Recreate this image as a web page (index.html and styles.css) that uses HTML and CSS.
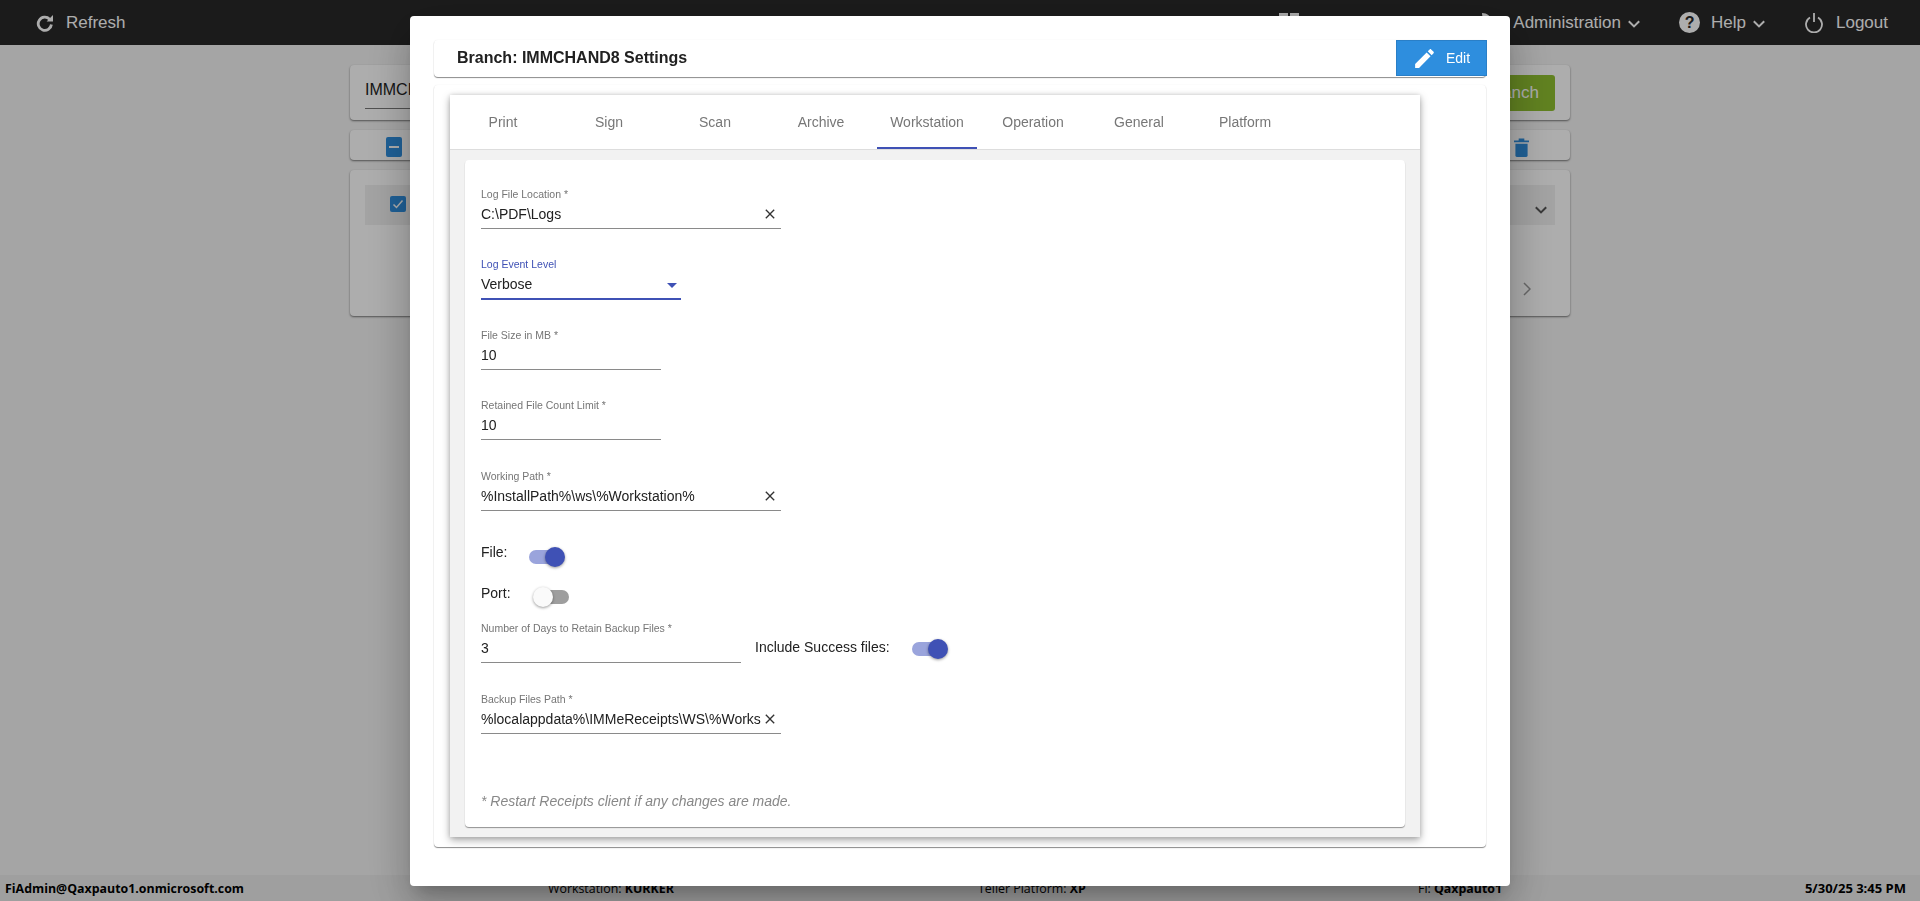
FILE: index.html
```html
<!DOCTYPE html>
<html lang="en">
<head>
<meta charset="utf-8">
<title>Branch Settings</title>
<link rel="stylesheet" href="styles.css">
</head>
<body>
<div class="page">
  <header class="topbar">
    <div class="nav-item refresh">
      <svg class="ico-refresh" viewBox="0 0 18 18"><path d="M13.6 5.2A6.6 6.6 0 1 0 15.4 10.5" fill="none" stroke="#fff" stroke-width="2.8"/><path d="M10.6 7.4H17V1z" fill="#fff"/></svg>
      <span>Refresh</span>
    </div>
    <div class="nav-spacer"></div>
    <svg class="ico-grid" viewBox="0 0 20 20"><path fill="#fff" d="M0 0h9v9H0zM11 0h9v9h-9zM0 11h9v9H0zM11 11h9v9h-9z"/></svg>
    <svg class="ico-wrench" viewBox="0 0 20 20"><path fill="#fff" d="M0 0c5 0 9 3 10 8l10 10-3 2L7 10C3 9 0 5 0 0z"/></svg>
    <div class="nav-item admin"><span>Administration</span><svg class="chev" viewBox="0 0 12 8"><path d="M.8 1.200 6 6.400l5.200-5.200" fill="none" stroke="#fff" stroke-width="2"/></svg></div>
    <div class="nav-item help"><span class="help-dot">?</span><span>Help</span><svg class="chev" viewBox="0 0 12 8"><path d="M.8 1.200 6 6.400l5.200-5.200" fill="none" stroke="#fff" stroke-width="2"/></svg></div>
    <div class="nav-item logout">
      <svg class="ico-power" viewBox="0 0 20 20"><path d="M6 4.500a8 8 0 1 0 8 0" fill="none" stroke="#fff" stroke-width="1.800"/><path d="M10 0v9" fill="none" stroke="#fff" stroke-width="1.800"/></svg>
      <span>Logout</span>
    </div>
  </header>

  <main class="behind">
    <section class="bg-card search-card">
      <div class="search-input">IMMCHAND8</div>
      <button class="green-btn">Add Branch</button>
    </section>
    <section class="bg-card tool-card">
      <svg class="box-minus" viewBox="0 0 16 20"><rect width="16" height="20" rx="2" fill="#2e8ede"/><path d="M3 10h10" stroke="#fff" stroke-width="2"/></svg>
      <svg class="trash" viewBox="0 0 16 20"><path d="M5 1.500h6M0 3.500h16" stroke="#2e8ede" stroke-width="2"/><path d="M1.500 6h13v12.500a1.500 1.500 0 0 1-1.500 1.500H3a1.500 1.500 0 0 1-1.500-1.500z" fill="#2e8ede"/></svg>
    </section>
    <section class="bg-card list-card">
      <div class="list-row">
        <svg class="box-check" viewBox="0 0 16 16"><rect width="16" height="16" rx="2" fill="#2e8ede"/><path d="M3.500 8.500 6.500 11.500 12.500 4.500" fill="none" stroke="#fff" stroke-width="1.500"/></svg>
        <svg class="row-chev" viewBox="0 0 12 8"><path d="M.8 1.200 6 6.400l5.200-5.200" fill="none" stroke="#555" stroke-width="2"/></svg>
      </div>
      <div class="pager">
        <svg class="pager-chev" viewBox="0 0 8 14"><path d="M1 1l6 6-6 6" fill="none" stroke="#999" stroke-width="1.500"/></svg>
      </div>
    </section>
  </main>

  <footer class="status">
    <span class="st-user">FiAdmin@Qaxpauto1.onmicrosoft.com</span>
    <span class="st-ws">Workstation: <b>KURKER</b></span>
    <span class="st-tp">Teller Platform: <b>XP</b></span>
    <span class="st-fi">Fi: <b>Qaxpauto1</b></span>
    <span class="st-date">5/30/25 3:45 PM</span>
  </footer>
</div>

<div class="backdrop">
  <div class="modal">
    <div class="head-card">
      <h1 class="title">Branch: IMMCHAND8 Settings</h1>
      <button class="edit-btn">
        <svg class="ico-edit" viewBox="0 0 24 24"><path fill="#fff" d="M3 17.250V21h3.750L17.810 9.940l-3.750-3.750L3 17.250zM20.710 7.040c.39-.39.39-1.020 0-1.410l-2.340-2.340c-.39-.39-1.020-.39-1.410 0l-1.830 1.830 3.750 3.750 1.830-1.830z"/></svg>
        <span>Edit</span>
      </button>
    </div>

    <div class="body-card">
      <div class="tab-panel">
        <nav class="tabs">
          <div class="tab">Print</div>
          <div class="tab">Sign</div>
          <div class="tab">Scan</div>
          <div class="tab">Archive</div>
          <div class="tab active">Workstation</div>
          <div class="tab">Operation</div>
          <div class="tab">General</div>
          <div class="tab">Platform</div>
        </nav>
        <div class="tab-body">
          <div class="form-card">
            <div class="field w300">
              <div class="label">Log File Location *</div>
              <div class="value"><span class="text">C:\PDF\Logs</span><svg class="clear" viewBox="0 0 24 24"><path d="M19 6.410L17.590 5 12 10.590 6.410 5 5 6.410 10.590 12 5 17.590 6.410 19 12 13.410 17.590 19 19 17.590 13.410 12z"/></svg></div>
            </div>
            <div class="field w200 focused">
              <div class="label">Log Event Level</div>
              <div class="value"><span class="text">Verbose</span><span class="arrow"></span></div>
            </div>
            <div class="field w180">
              <div class="label">File Size in MB *</div>
              <div class="value"><span class="text">10</span></div>
            </div>
            <div class="field w180">
              <div class="label">Retained File Count Limit *</div>
              <div class="value"><span class="text">10</span></div>
            </div>
            <div class="field w300 extra-top">
              <div class="label">Working Path *</div>
              <div class="value"><span class="text">%InstallPath%\ws\%Workstation%</span><svg class="clear" viewBox="0 0 24 24"><path d="M19 6.410L17.590 5 12 10.590 6.410 5 5 6.410 10.590 12 5 17.590 6.410 19 12 13.410 17.590 19 19 17.590 13.410 12z"/></svg></div>
            </div>
            <div class="toggle-row file-row">
              <span class="toggle-label lab-file">File:</span>
              <span class="toggle on"><span class="track"></span><span class="thumb"></span></span>
            </div>
            <div class="toggle-row port-row">
              <span class="toggle-label lab-port">Port:</span>
              <span class="toggle off"><span class="track"></span><span class="thumb"></span></span>
            </div>
            <div class="days-row">
              <div class="field w260">
                <div class="label">Number of Days to Retain Backup Files *</div>
                <div class="value"><span class="text">3</span></div>
              </div>
              <span class="toggle-label lab-success">Include Success files:</span>
              <span class="toggle on"><span class="track"></span><span class="thumb"></span></span>
            </div>
            <div class="field w300">
              <div class="label">Backup Files Path *</div>
              <div class="value"><span class="text">%localappdata%\IMMeReceipts\WS\%Works</span><svg class="clear" viewBox="0 0 24 24"><path d="M19 6.410L17.590 5 12 10.590 6.410 5 5 6.410 10.590 12 5 17.590 6.410 19 12 13.410 17.590 19 19 17.590 13.410 12z"/></svg></div>
            </div>
            <p class="note">* Restart Receipts client if any changes are made.</p>
          </div>
        </div>
      </div>
    </div>
  </div>
</div>
</body>
</html>
```
FILE: styles.css
```css
* { box-sizing: border-box; }
html, body { margin: 0; height: 100%; overflow: hidden; }
body { font-family: "Liberation Sans", Arial, sans-serif; background: #f3f3f3; }

.page { height: 901px; display: flex; flex-direction: column; }

/* top bar */
.topbar {
  height: 45px; flex: none; background: #292929; color: #fff;
  display: flex; align-items: center;
  font-family: "Liberation Sans", Arial, sans-serif; font-size: 17px;
}
.nav-item { display: flex; align-items: center; }
.nav-spacer { flex: 1; }
.refresh { margin-left: 36px; }
.ico-refresh { width: 18px; height: 18px; margin-right: 12px; }
.ico-grid { width: 20px; height: 20px; margin-right: 183px; }
.ico-wrench { width: 20px; height: 20px; margin-right: 11px; }
.admin { margin-right: 39px; }
.help { margin-right: 39px; }
.logout { margin-right: 32px; }
.chev { width: 12px; height: 8px; margin-left: 7px; margin-top: 2px; }
.help-dot {
  width: 21px; height: 21px; border-radius: 50%; background: #fff; color: #292929;
  display: flex; align-items: center; justify-content: center;
  font-weight: 700; font-size: 16px; margin-right: 11px;
}
.ico-power { width: 20px; height: 20px; margin-right: 12px; }

/* background page */
.behind { flex: 1; padding: 20px 350px 0; display: flex; flex-direction: column; gap: 10px; }
.bg-card { background: #fff; border-radius: 4px; box-shadow: 0 1px 2px rgba(0,0,0,.5); }
.search-card { height: 55px; padding: 10px 15px; display: flex; justify-content: space-between; }
.search-input { width: 400px; height: 34px; font-size: 16px; line-height: 30px; border-bottom: 1px solid #777; color: #222; }
.green-btn { width: 130px; height: 36px; border: 0; border-radius: 3px; background: #8fbf30; color: #fff; font-size: 17px; font-family: inherit; text-align: right; padding: 0 16px 0 0; }
.tool-card { height: 30px; padding: 5px 41px 0 36px; display: flex; justify-content: space-between; }
.box-minus { width: 16px; height: 20px; margin-top: 2px; }
.trash { width: 15px; height: 19px; margin-top: 3px; }
.list-card { height: 146px; padding: 15px; }
.list-row { height: 40px; background: #f0f0f0; padding: 11px 8px 0 25px; display: flex; justify-content: space-between; }
.box-check { width: 16px; height: 16px; }
.row-chev { width: 12px; height: 8px; margin-top: 10px; }
.pager { display: flex; justify-content: flex-end; padding: 57px 24px 0 0; }
.pager-chev { width: 8px; height: 14px; }

/* status bar */
.status {
  height: 26px; flex: none; background: #ebebeb; color: #000;
  display: flex; align-items: center; padding: 0 14px 0 5px;
  font-family: "Open Sans", sans-serif; font-size: 12.400px; font-weight: 600;
}
.status b { font-weight: 700; }
.st-user { font-weight: 700; width: 543px; }
.st-ws, .st-tp, .st-fi { font-weight: 400; }
.st-ws { width: 430px; }
.st-tp { width: 440px; }
.st-fi { flex: 1; }
.st-date { font-weight: 700; font-size: 13px; }

/* modal */
.backdrop {
  position: fixed; inset: 0; background: rgba(0,0,0,.32);
  display: flex; justify-content: center; align-items: flex-start; padding-top: 16px;
}
.modal {
  width: 1100px; height: 870px; background: #fff; border-radius: 4px; padding: 24px;
  box-shadow: 0 11px 15px -7px rgba(0,0,0,.2), 0 24px 38px 3px rgba(0,0,0,.14), 0 9px 46px 8px rgba(0,0,0,.12);
}
.head-card {
  height: 37px; background: #fff; border-radius: 4px; padding-left: 23px;
  display: flex; align-items: center; justify-content: space-between;
  box-shadow: 0 1px 1px rgba(0,0,0,.45), 0 0 2px rgba(0,0,0,.06);
}
.title { margin: 0 0 2px; font-size: 16px; font-weight: 700; color: #212121; }
.edit-btn {
  width: 91px; height: 36px; margin: 0 -1px 1px 0; padding: 0 0 0 16px;
  background: #2e8ede; border: 1px solid #2a7fc7; color: #fff;
  display: flex; align-items: center; gap: 9px;
  font-family: "Liberation Sans", Arial, sans-serif; font-size: 14px;
}
.ico-edit { width: 25px; height: 25px; margin-left: -1px; }

.body-card {
  margin-top: 8px; height: 762px; background: #fff; border-radius: 4px; padding: 10px 66px 10px 16px;
  box-shadow: 0 1px 1px rgba(0,0,0,.45), 0 0 2px rgba(0,0,0,.06);
}
.tab-panel {
  height: 742px; display: flex; flex-direction: column; background: #f2f2f2;
  box-shadow: 0 3px 8px rgba(0,0,0,.35), 0 0 4px rgba(0,0,0,.12);
}
.tabs { height: 55px; flex: none; display: flex; background: #fff; border-bottom: 1px solid #ddd; }
.tab {
  width: 106px; height: 54px; display: flex; align-items: center; justify-content: center;
  font-size: 14px; color: #777; padding-bottom: 1px;
}
.tab.active { background: linear-gradient(#3f51b5, #3f51b5) center bottom / 100px 2px no-repeat; }
.tab-body { flex: 1; padding: 10px 15px; }
.form-card {
  height: 667px; background: #fff; border-radius: 4px; padding: 28px 16px 0;
  box-shadow: 0 1px 1px rgba(0,0,0,.4);
}

.field { margin-bottom: 29px; }
.w300 { width: 300px; }
.w260 { width: 260px; margin-bottom: 0; }
.w200 { width: 200px; }
.w180 { width: 180px; }
.extra-top { margin-top: 30px; }
.label { height: 12px; line-height: 12px; font-size: 10.500px; color: #757575; margin-bottom: 4px; white-space: nowrap; }
.value {
  height: 25px; font-size: 14px; line-height: 20px; color: #212121; padding-bottom: 4px;
  display: flex; align-items: flex-start; justify-content: space-between;
  border-bottom: 1px solid #8a8a8a;
}
.text { white-space: nowrap; overflow: hidden; }
.clear { width: 16px; height: 16px; margin: 2px 3px 0 0; flex: none; fill: #333; }
.focused .label { color: #3f51b5; }
.focused .value { border-bottom: 2px solid #3f51b5; height: 26px; }
.arrow { width: 0; height: 0; margin: 9px 4px 0 0; border-left: 5px solid transparent; border-right: 5px solid transparent; border-top: 5px solid #3f51b5; }

.toggle-label { font-size: 14px; line-height: 22px; color: #212121; white-space: nowrap; }
.toggle-row { display: flex; align-items: flex-start; }
.file-row { height: 26px; margin-top: 30px; }
.port-row { height: 25px; margin-top: 15px; }
.lab-file { width: 48px; }
.lab-port { width: 52px; }
.toggle { display: block; position: relative; width: 36px; height: 20px; flex: none; }
.file-row .toggle { margin-top: 6px; }
.port-row .toggle { margin-top: 5px; }
.track { position: absolute; top: 3px; height: 14px; width: 34px; border-radius: 7px; }
.thumb { position: absolute; top: 0; width: 20px; height: 20px; border-radius: 50%; box-shadow: 0 1px 3px rgba(0,0,0,.4); }
.on .track { left: 0; background: #9aa4dc; }
.on .thumb { left: 16px; background: #3f51b5; }
.off .track { left: 2px; background: #9e9e9e; }
.off .thumb { left: 0; background: #fafafa; }

.days-row { display: flex; align-items: flex-start; height: 41px; margin: 15px 0 30px; }
.lab-success { margin: 14px 0 0 14px; width: 157px; }
.days-row .toggle { margin-top: 17px; }

.note { margin: 57px 0 0; font-size: 14px; line-height: 20px; font-style: italic; color: #888; }
```
